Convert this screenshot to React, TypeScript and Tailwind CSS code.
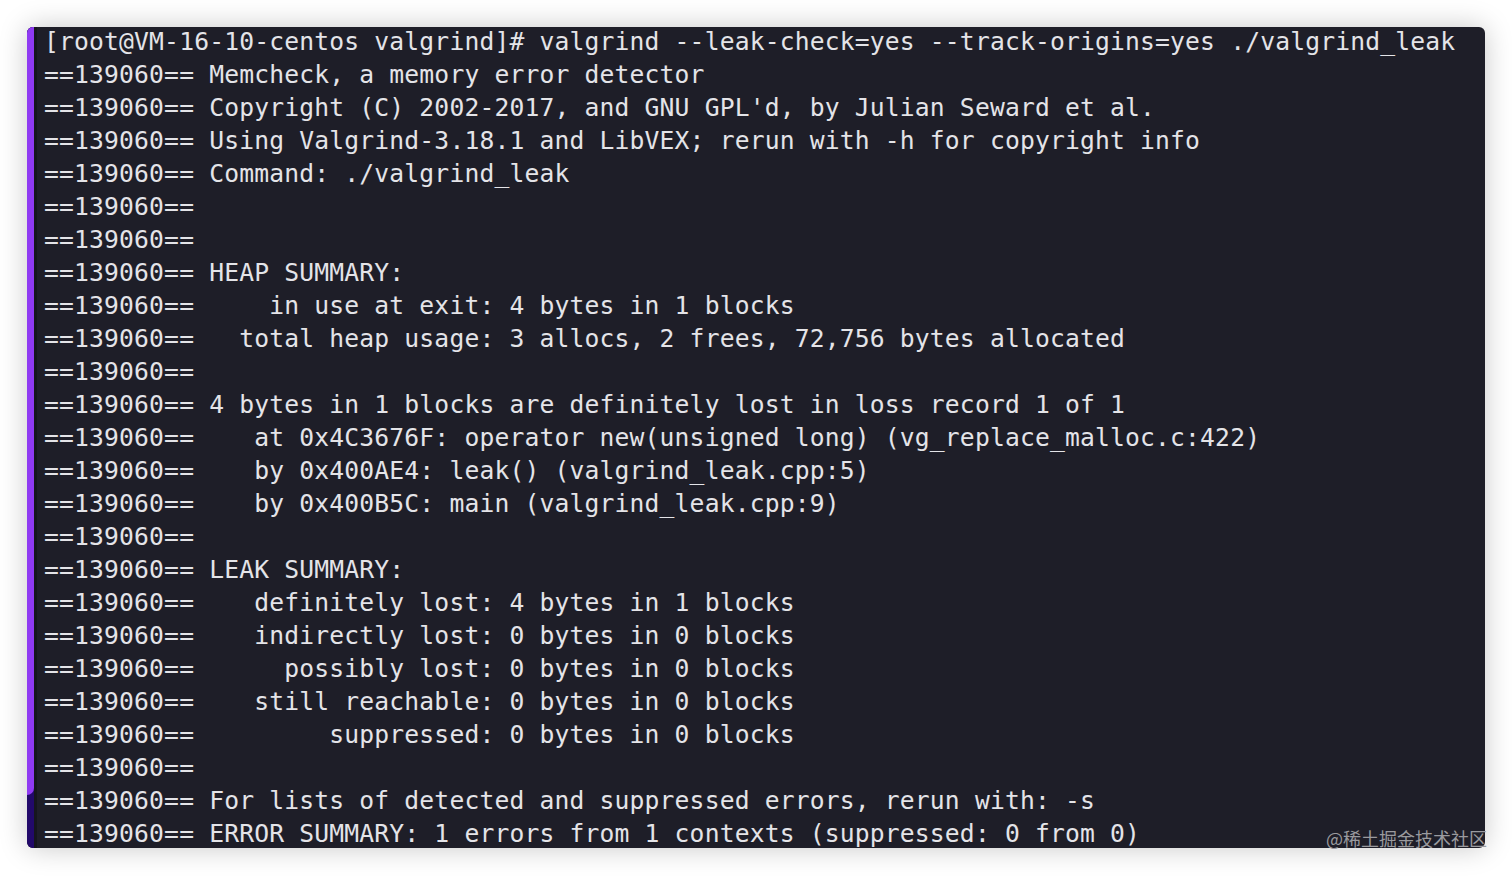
const lines: string[] = [
  '[root@VM-16-10-centos valgrind]# valgrind --leak-check=yes --track-origins=yes ./valgrind_leak',
  '==139060== Memcheck, a memory error detector',
  "==139060== Copyright (C) 2002-2017, and GNU GPL'd, by Julian Seward et al.",
  '==139060== Using Valgrind-3.18.1 and LibVEX; rerun with -h for copyright info',
  '==139060== Command: ./valgrind_leak',
  '==139060==',
  '==139060==',
  '==139060== HEAP SUMMARY:',
  '==139060==     in use at exit: 4 bytes in 1 blocks',
  '==139060==   total heap usage: 3 allocs, 2 frees, 72,756 bytes allocated',
  '==139060==',
  '==139060== 4 bytes in 1 blocks are definitely lost in loss record 1 of 1',
  '==139060==    at 0x4C3676F: operator new(unsigned long) (vg_replace_malloc.c:422)',
  '==139060==    by 0x400AE4: leak() (valgrind_leak.cpp:5)',
  '==139060==    by 0x400B5C: main (valgrind_leak.cpp:9)',
  '==139060==',
  '==139060== LEAK SUMMARY:',
  '==139060==    definitely lost: 4 bytes in 1 blocks',
  '==139060==    indirectly lost: 0 bytes in 0 blocks',
  '==139060==      possibly lost: 0 bytes in 0 blocks',
  '==139060==    still reachable: 0 bytes in 0 blocks',
  '==139060==         suppressed: 0 bytes in 0 blocks',
  '==139060==',
  '==139060== For lists of detected and suppressed errors, rerun with: -s',
  '==139060== ERROR SUMMARY: 1 errors from 1 contexts (suppressed: 0 from 0)',
];

export default function App() {
  return (
    <div className="w-[1512px] h-[876px] bg-white pt-[27px] pl-[27px] overflow-hidden">
      <div className="relative w-[1458px] h-[821px]">
        {/* terminal window */}
        <div className="flex w-full h-full rounded-[6px] overflow-hidden bg-[#1e1e28] shadow-[0_0_28px_rgba(0,0,0,0.22)]">
          {/* left accent strip */}
          <div className="flex flex-col w-[7px] bg-[#22096a]">
            <div className="h-[768px] bg-[#8f3af2] rounded-br-[7px]" />
          </div>
          <div className="w-[3px] bg-[#16161d]" />
          <div className="flex-1 pl-[7px] mt-[-2.5px] font-['DejaVu_Sans_Mono',monospace] text-[24.67px] tracking-[0.17px] leading-[33px] text-[#e4e4e8]">
            {lines.map((line, i) => (
              <div key={i} className="whitespace-pre">
                {line}
              </div>
            ))}
          </div>
        </div>

        {/* watermark */}
        <div className="absolute right-[-2px] bottom-[-1px] font-['Noto_Sans_CJK_SC',sans-serif] text-[18px] leading-[22px] text-[#9a9a9e]">
          @稀土掘金技术社区
        </div>
      </div>
    </div>
  );
}
